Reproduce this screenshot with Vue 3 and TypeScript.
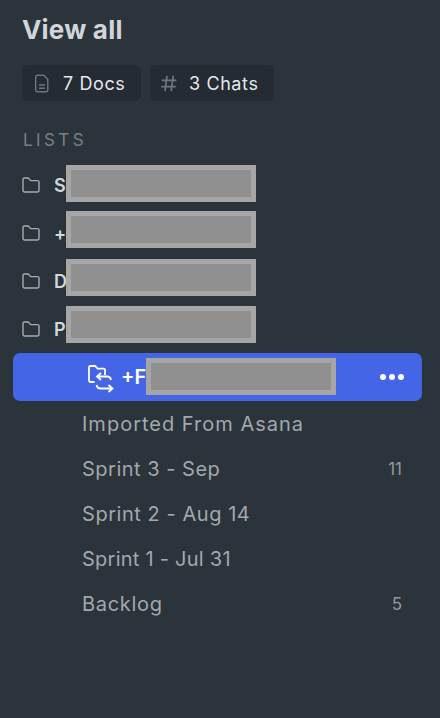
<script setup lang="ts">
const folders = [
  { letter: 'S', cls: 'r1' },
  { letter: '+', cls: 'r2' },
  { letter: 'D', cls: 'r3' },
  { letter: 'P', cls: 'r4' },
]
const lists = [
  { name: 'Imported From Asana', count: '', spacing: 1 },
  { name: 'Sprint 3 - Sep', count: '11', spacing: 0.5 },
  { name: 'Sprint 2 - Aug 14', count: '', spacing: 0.55 },
  { name: 'Sprint 1 - Jul 31', count: '', spacing: 0.25 },
  { name: 'Backlog', count: '5', spacing: 0.7 },
]
</script>

<template>
  <div class="panel">
    <h1 class="title">View all</h1>
    <div class="chips">
      <div class="chip docs">
        <svg class="doc" width="16" height="19" viewBox="0 0 16 19" fill="none" stroke="#6f767e" stroke-width="1.4">
          <path d="M3.5 1.2h6.3l4 4v11a1.8 1.8 0 0 1-1.8 1.6H3.5a1.8 1.8 0 0 1-1.8-1.6V3a1.8 1.8 0 0 1 1.8-1.8z" />
          <path d="M5 11h6M5 14.2h6" />
        </svg>
        <span>7 Docs</span>
      </div>
      <div class="chip chats">
        <svg class="hash" width="16" height="17" viewBox="0 0 16 17" fill="none" stroke="#6f767e" stroke-width="1.7">
          <path d="M6 .8 4 16.2M12.2.8l-2 15.4M.8 5.4h14.6M.2 11.6h14.6" />
        </svg>
        <span>3 Chats</span>
      </div>
    </div>
    <div class="section">LISTS</div>
    <div class="folders">
      <div v-for="f in folders" :key="f.letter" class="folder" :class="f.cls">
        <svg width="18" height="16" viewBox="0 0 18 16" fill="none" stroke="#a8acb0" stroke-width="1.4" stroke-linejoin="round">
          <path d="M1 2.4A1.4 1.4 0 0 1 2.4 1h3.9l2.3 2.6h6.9A1.4 1.4 0 0 1 17 5v8.6a1.4 1.4 0 0 1-1.4 1.4H2.4A1.4 1.4 0 0 1 1 13.6z" />
        </svg>
        <span class="letter">{{ f.letter }}</span>
        <div class="redact"></div>
      </div>
    </div>
    <div class="active">
      <svg class="share" width="26" height="28" viewBox="0 0 26 28" fill="none" stroke="#fff" stroke-width="1.8">
        <path d="M6.5 17H2.4A1.4 1.4 0 0 1 1 15.6V2.4A1.4 1.4 0 0 1 2.4 1h4.8l2.4 2.6h6.2A1.4 1.4 0 0 1 17 5v5" />
        <path d="M23 15c-.5-2.4-2-3.5-4-3.5H9.5M13 8l-4 3.5 4 3.5" />
        <path d="M8.5 20c.5 2.4 2 3.5 4 3.5H24M20.5 20l4 3.5-4 3.5" />
      </svg>
      <span class="active-letter">+F</span>
      <div class="redact"></div>
      <div class="dots"><i></i><i></i><i></i></div>
    </div>
    <div class="items">
      <div v-for="l in lists" :key="l.name" class="item">
        <span :style="{ letterSpacing: l.spacing + 'px' }">{{ l.name }}</span>
        <span v-if="l.count" class="count">{{ l.count }}</span>
      </div>
    </div>
  </div>
</template>

<style>
html, body { margin: 0; background: #2b333b; }
</style>

<style scoped>
.panel {
  width: 440px;
  height: 718px;
  background: #2b333b;
  box-sizing: border-box;
  overflow: hidden;
  padding-top: 15px;
  font-family: "Inter", "Liberation Sans", sans-serif;
}
.title {
  margin: 0 0 0 22px;
  font-size: 26px;
  line-height: 29px;
  font-weight: 700;
  letter-spacing: 0.2px;
  color: #d2d6da;
}
.chips {
  display: flex;
  gap: 9px;
  margin: 21px 0 0 22px;
}
.chip {
  height: 36px;
  box-sizing: border-box;
  display: flex;
  align-items: center;
  background: #242b32;
  border-radius: 6px;
  color: #e6e8ea;
  font-size: 18px;
  letter-spacing: 0.6px;
}
.docs { width: 119px; padding-left: 12px; gap: 13px; }
.chats { width: 124px; padding-left: 11px; gap: 12px; }
.section {
  margin: 29px 0 0 23px;
  font-size: 17px;
  line-height: 20px;
  letter-spacing: 3.4px;
  color: #7a7f85;
}
.folders { margin-top: 15px; }
.folder {
  height: 37px;
  display: flex;
  align-items: center;
  padding-left: 22px;
  color: #d4d7da;
  font-size: 18px;
  font-weight: 600;
}
.folder svg { flex: none; }
.r1 svg, .r1 .letter { margin-top: 3px; }
.r2 svg, .r2 .letter { margin-top: 7px; }
.r3 svg, .r3 .letter { margin-top: 7px; }
.r4 svg, .r4 .letter { margin-top: 9px; }
.r2 { margin-top: 9px; }
.r3 { margin-top: 11px; }
.r4 { margin-top: 10px; }
.letter { width: 14px; margin-left: 14px; white-space: nowrap; }
.redact {
  width: 190px;
  height: 37px;
  box-sizing: border-box;
  background: #909090;
  border: 5px solid #a6a6a6;
  flex: none;
}
.folder .redact { margin-left: -2px; position: relative; }
.active {
  margin: 10px 18px 0 13px;
  height: 48px;
  background: #4466e6;
  border-radius: 7px;
  display: flex;
  align-items: center;
  padding-left: 75px;
  color: #fff;
  font-size: 20px;
  font-weight: 600;
}
.share { flex: none; margin-right: 7px; margin-top: 4px; }
.active-letter { width: 25px; white-space: nowrap; }
.active .redact { margin-top: -1px; }
.dots { display: flex; gap: 3px; margin-left: auto; margin-right: 18px; }
.dots i { width: 6px; height: 6px; border-radius: 50%; background: #fff; }
.item {
  height: 45px;
  display: flex;
  align-items: center;
  justify-content: space-between;
  padding: 0 38px 0 82px;
  color: #a3a8ad;
  font-size: 20px;
}
.count { font-size: 17px; color: #969a9e; }
</style>
